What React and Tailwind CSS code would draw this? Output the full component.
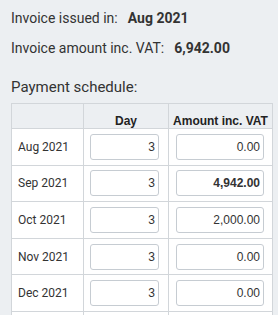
import React from "react";

const rows = [
  { m: "Aug 2021", d: "3", a: "0.00", b: false },
  { m: "Sep 2021", d: "3", a: "4,942.00", b: true },
  { m: "Oct 2021", d: "3", a: "2,000.00", b: false },
  { m: "Nov 2021", d: "3", a: "0.00", b: false },
  { m: "Dec 2021", d: "3", a: "0.00", b: false },
];

export default function App() {
  return (
    <div className="w-[278px] h-[315px] overflow-hidden bg-[#eceff2] text-[#333] font-['Roboto',sans-serif]">
      <div className="pl-[11px] pt-[8px]">
        <div className="h-[20px] leading-[20px] text-[14px]">
          Invoice issued in:<span className="font-bold ml-[10px]">Aug 2021</span>
        </div>
        <div className="mt-[10px] h-[20px] leading-[20px] text-[14px]">
          Invoice amount inc. VAT:<span className="font-bold ml-[10px]">6,942.00</span>
        </div>
        <div className="mt-[19px] h-[20px] leading-[20px] text-[15px]">Payment schedule:</div>
        <div className="mt-[6px] w-[262px] border-l border-r border-t border-[#d2d6da]">
          <div className="flex h-[25px] border-b border-[#d2d6da] font-['Liberation_Sans',Arial,sans-serif] font-bold text-[12px] leading-[14px] text-[#222]">
            <div className="w-[72px] border-r border-[#d2d6da]" />
            <div className="w-[85px] border-r border-[#d2d6da] flex items-end justify-center">Day</div>
            <div className="flex-1 flex items-end justify-center">Amount inc. VAT</div>
          </div>
          {rows.map((r) => (
            <div key={r.m} className="flex h-[36.6px] border-b border-[#d2d6da] bg-white">
              <div className="w-[72px] border-r border-[#d2d6da] flex items-center pl-[6px] text-[12px]">{r.m}</div>
              <div className="w-[85px] border-r border-[#d2d6da] flex items-center pl-[6px]">
                <div className="w-[69px] h-[26px] border border-[#c6ccd2] rounded-[3px] bg-white flex items-center justify-end px-[3px] font-['Liberation_Sans',Arial,sans-serif] text-[12px]">
                  {r.d}
                </div>
              </div>
              <div className="flex-1 flex items-center pl-[7px]">
                <div className={"w-[88px] h-[26px] border border-[#c6ccd2] rounded-[3px] bg-white flex items-center justify-end px-[3px] font-['Liberation_Sans',Arial,sans-serif] text-[12px]" + (r.b ? " font-bold" : "")}>
                  {r.a}
                </div>
              </div>
            </div>
          ))}
          <div className="flex h-[36.6px] border-b border-[#d2d6da] bg-white">
            <div className="w-[72px] border-r border-[#d2d6da]" />
            <div className="w-[85px] border-r border-[#d2d6da]" />
            <div className="flex-1" />
          </div>
        </div>
      </div>
    </div>
  );
}
